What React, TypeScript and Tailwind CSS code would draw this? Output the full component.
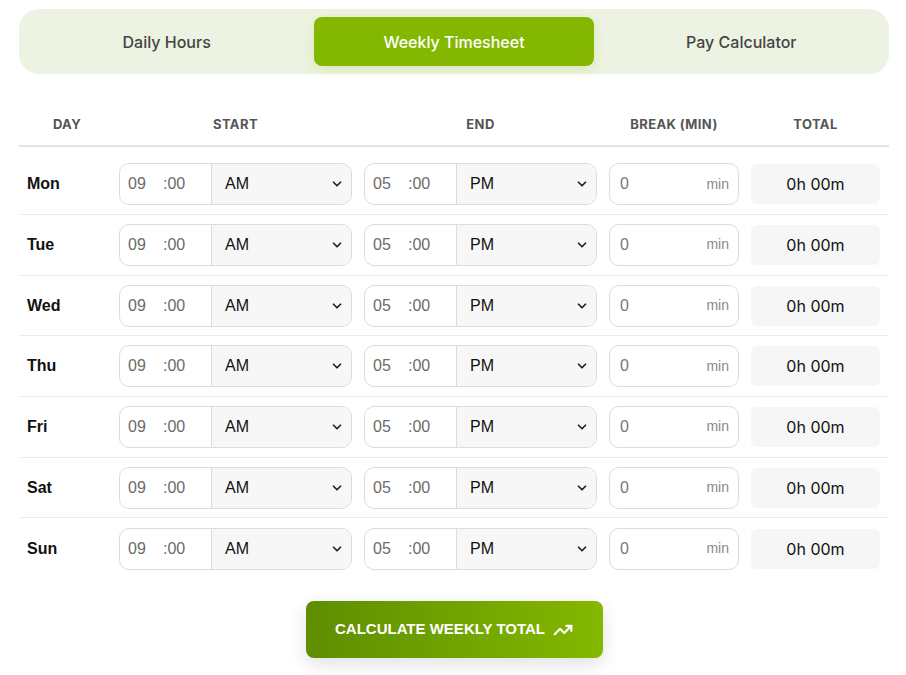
import { ChevronDown, TrendingUp } from 'lucide-react'

const days = ['Mon', 'Tue', 'Wed', 'Thu', 'Fri', 'Sat', 'Sun']

const tabs = ['Daily Hours', 'Weekly Timesheet', 'Pay Calculator']

function TimeInput({ hour, period }: { hour: string; period: string }) {
  return (
    <div className="flex h-[42px] w-[233px] overflow-hidden rounded-[10px] border border-[#dcdcdc] bg-white">
      <div className="flex w-[91px] items-center px-[6px] text-[16px] text-[#6b6b6b]">
        <span className="flex h-full w-[33px] items-center rounded-[8px] pl-[2px]">{hour}</span>
        <span className="flex h-full w-[40px] items-center rounded-[8px] pl-[4px]">:00</span>
      </div>
      <div className="flex flex-1 items-center justify-between border-l border-[#dcdcdc] bg-[#f7f7f7] pl-[13px] pr-[7px] text-[16px] text-[#111]">
        <span>{period}</span>
        <ChevronDown size={14} strokeWidth={3} className="text-[#222]" />
      </div>
    </div>
  )
}

export default function App() {
  return (
    <div className="min-h-screen bg-white px-[19px] pt-[9px] font-['Liberation_Sans',Arial,sans-serif]">
      <div className="flex w-[870px] gap-2 rounded-[20px] bg-[#edf3e2] p-2 font-['Inter',sans-serif]">
        {tabs.map((tab) => (
          <div
            key={tab}
            className={
              tab === 'Weekly Timesheet'
                ? 'flex h-[49px] flex-1 items-center justify-center rounded-[8px] bg-[#84b800] text-[16px] font-medium text-white shadow-[0_4px_14px_rgba(132,184,0,0.18)]'
                : 'flex h-[49px] flex-1 items-center justify-center rounded-[8px] text-[16px] font-medium text-[#444]'
            }
          >
            {tab}
          </div>
        ))}
      </div>

      <div className="mt-[41px] w-[870px]">
        <div className="grid grid-cols-[80px_233px_233px_130px_129px] gap-x-3 border-b-2 border-[#e3e3e3] px-2 pb-[10px] font-['Inter',sans-serif] text-[13px] font-bold tracking-[0.03em] text-[#555]">
          <div className="text-center">DAY</div>
          <div className="text-center">START</div>
          <div className="text-center">END</div>
          <div className="text-center">BREAK (MIN)</div>
          <div className="text-center">TOTAL</div>
        </div>

        <div className="pt-[8px]">
          {days.map((day, i) => (
            <div
              key={day}
              className={
                i < days.length - 1
                  ? 'grid h-[60.67px] grid-cols-[80px_233px_233px_130px_129px] items-center gap-x-3 border-b border-[#ececec] px-2'
                  : 'grid h-[60.67px] grid-cols-[80px_233px_233px_130px_129px] items-center gap-x-3 px-2'
              }
            >
              <div className="text-[16px] font-bold text-[#111]">{day}</div>
              <TimeInput hour="09" period="AM" />
              <TimeInput hour="05" period="PM" />
              <div className="flex h-[42px] items-center justify-between rounded-[10px] border border-[#dcdcdc] bg-white pl-[10px] pr-[9px]">
                <span className="text-[16px] text-[#777]">0</span>
                <span className="text-[14px] text-[#888]">min</span>
              </div>
              <div className="flex h-[40px] items-center justify-center rounded-[6px] bg-[#f5f6f5] font-['Inter',sans-serif] text-[16px] text-[#111]">
                0h 00m
              </div>
            </div>
          ))}
        </div>
      </div>

      <div className="mt-[22px] flex w-[870px] justify-center">
        <button className="flex h-[57px] w-[297px] items-center justify-center gap-[8px] rounded-[8px] bg-gradient-to-r from-[#5e8e00] to-[#84b800] text-[15px] font-bold text-white shadow-[0_6px_18px_rgba(0,0,0,0.12)]">
          CALCULATE WEEKLY TOTAL
          <TrendingUp size={20} strokeWidth={2.5} />
        </button>
      </div>
    </div>
  )
}
